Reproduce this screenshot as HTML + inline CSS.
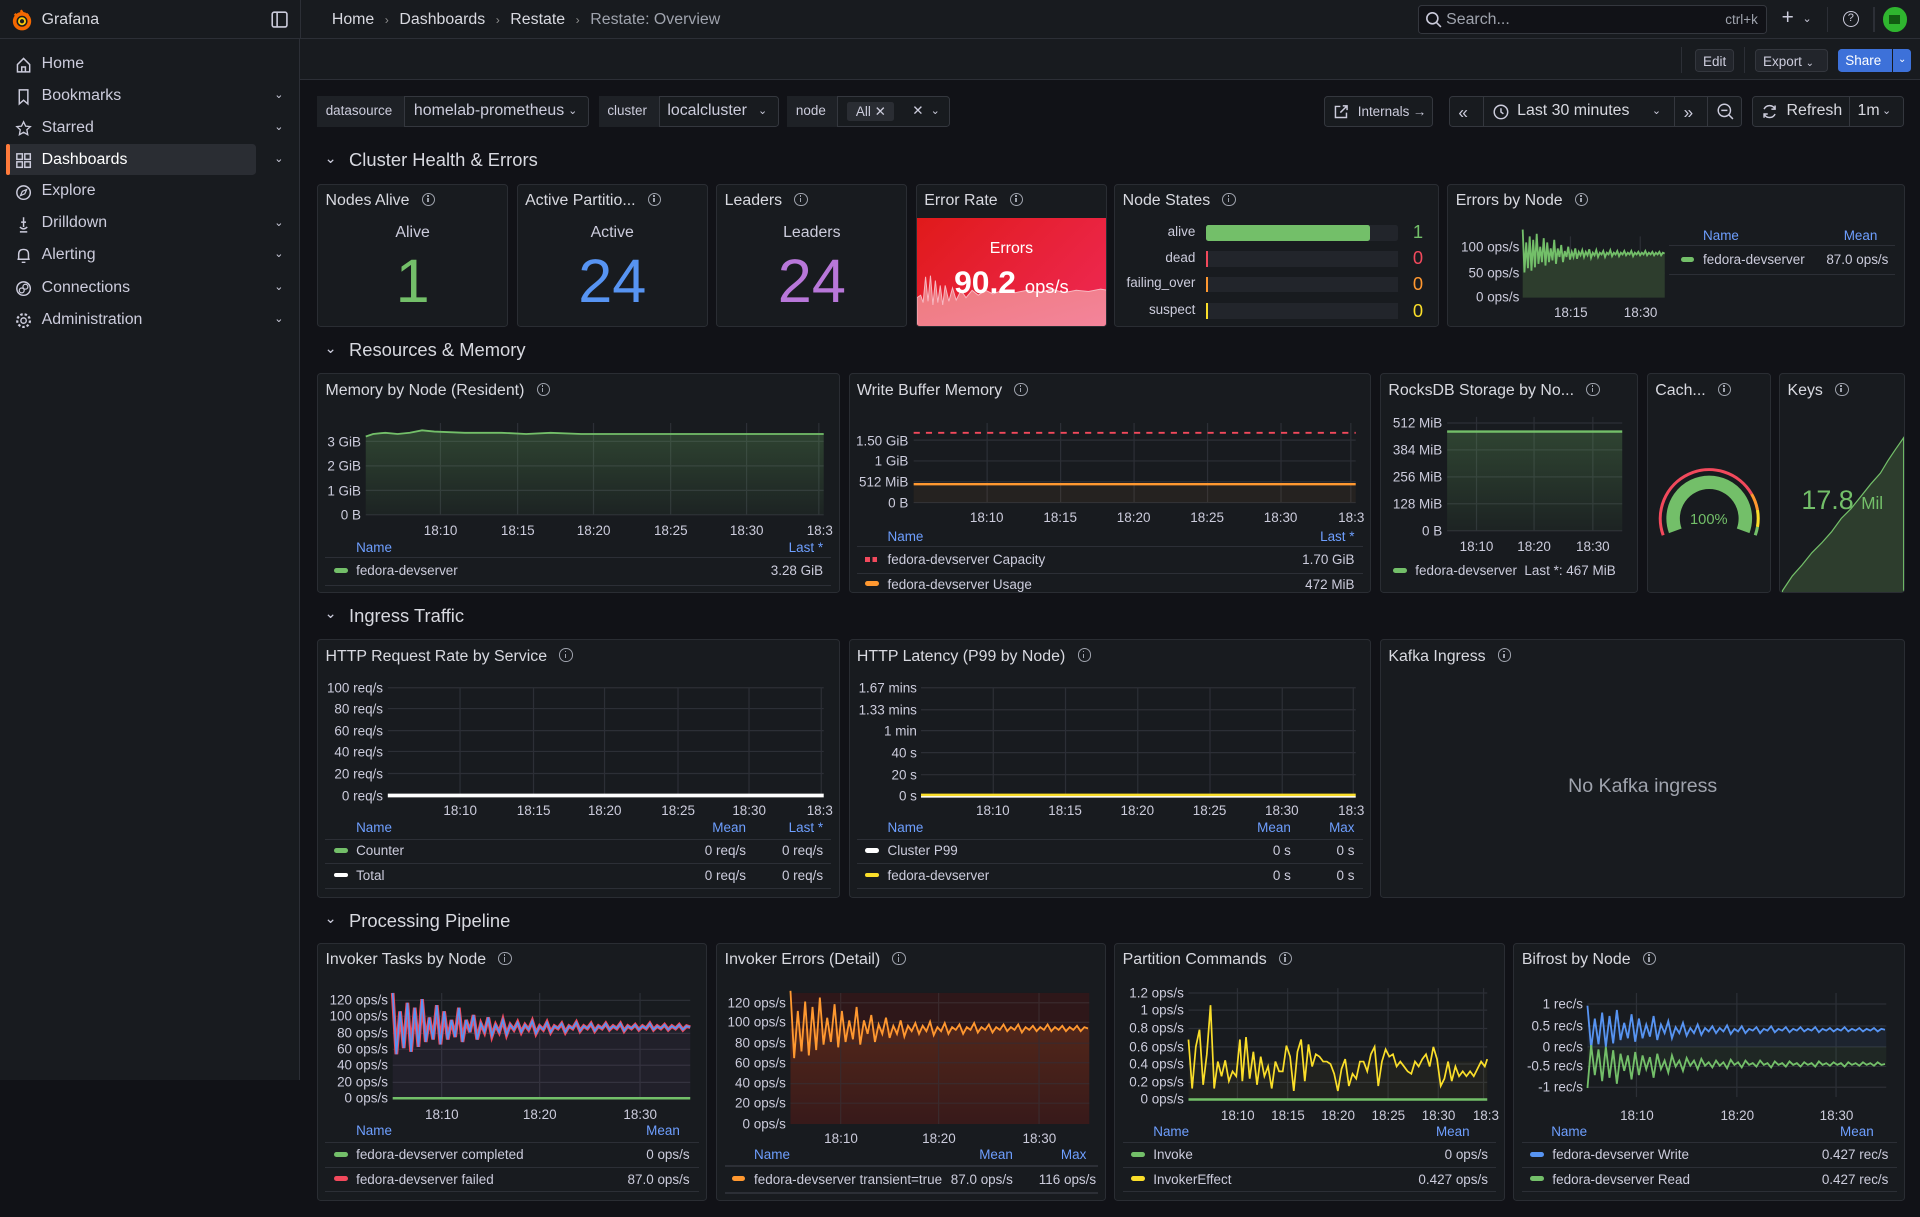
<!DOCTYPE html>
<html><head><meta charset="utf-8">
<style>
html{zoom:1.22449}
*{box-sizing:border-box;margin:0;padding:0}
body{width:1568px;height:994px;background:#111217;font-family:"Liberation Sans",sans-serif;color:#ccccdc;position:relative;overflow:hidden;font-size:12px}
.a{position:absolute}
.sb{left:0;top:0;width:245px;height:882px;background:#181b1f;border-right:1px solid #2c2f36}
.hd{left:0;top:0;width:1568px;height:32px;background:#181b1f;border-bottom:1px solid #2c2f36}
.sub{left:245px;top:32px;width:1323px;height:33px;background:#181b1f;border-bottom:1px solid #2c2f36}
.ni{left:0;width:245px;height:20px;font-size:13px;color:#ccccdc}
.ni span{position:absolute;left:34px;top:2px}
.ni svg{position:absolute;left:12px;top:3px}
.ni i{position:absolute;left:224px;top:3px;font-style:normal;font-size:9px;color:#ccccdc}
.p{position:absolute;background:#181b1f;border:1px solid #2a2d33;border-radius:3px;overflow:hidden}
.tt{position:absolute;left:6px;top:6px;font-size:13px;color:#d8d9e0;white-space:nowrap}
.inf{display:inline-block;width:11px;height:11px;border:1.3px solid #9fa3ad;border-radius:50%;margin-left:10px;vertical-align:-1px;position:relative}
.inf:after{content:"";position:absolute;left:3.5px;top:3.5px;width:1.3px;height:3.5px;background:#9fa3ad}
.inf:before{content:"";position:absolute;left:3.5px;top:1.2px;width:1.3px;height:1.3px;background:#9fa3ad}
.yl{position:absolute;font-size:11px;color:#ccccdc;text-align:right;white-space:nowrap;transform:translateY(-50%)}
.xl{position:absolute;font-size:11px;color:#ccccdc;transform:translateX(-50%);white-space:nowrap}
.lh{position:absolute;font-size:11px;color:#6e9fff}
.lr{position:absolute;font-size:11px;color:#ccccdc;white-space:nowrap}
.ln{position:absolute;height:1px;background:#2c2f36}
.sw{display:inline-block;width:11px;height:4px;border-radius:2px;margin-right:7px;vertical-align:2px}
.sec{position:absolute;font-size:15px;color:#d8d9e0}
.sec:before{content:"⌄";font-size:12px;margin-right:10px;position:relative;top:-3px;color:#ccccdc}
.btn{position:absolute;height:26px;border:1px solid #34373e;border-radius:3px;background:#181b1f;font-size:12px}
.vl{position:absolute;font-size:11px;color:#ccccdc}
.big{position:absolute;left:0;width:100%;text-align:center}
svg{position:absolute;left:0;top:0;overflow:visible}
</style></head><body>

<!-- header -->
<div class="a hd"></div>
<svg width="18" height="18" style="left:9px;top:7px" viewBox="0 0 18 18"><circle cx="9" cy="10" r="6" fill="none" stroke="#f46800" stroke-width="3"/><circle cx="9" cy="10" r="2.5" fill="none" stroke="#fbca0a" stroke-width="1.5"/><path d="M8 1 L10 4 M3 4 L5 6 M14 4 L12 6" stroke="#f46800" stroke-width="2"/></svg>
<div class="a" style="left:34px;top:9px;font-size:13px;color:#d8d9e0">Grafana</div>
<svg width="14" height="14" style="left:221px;top:9px"><rect x="1" y="1" width="12" height="12" rx="1.5" fill="none" stroke="#ccccdc" stroke-width="1.3"/><line x1="5" y1="1" x2="5" y2="13" stroke="#ccccdc" stroke-width="1.3"/></svg>
<div class="a" style="left:245px;top:0;width:1px;height:32px;background:#2c2f36"></div>
<div class="a" style="left:271px;top:9px;font-size:13px;color:#d8d9e0">Home <span style="color:#8e8e8e;font-size:10px;margin:0 5px">›</span> Dashboards <span style="color:#8e8e8e;font-size:10px;margin:0 5px">›</span> Restate <span style="color:#8e8e8e;font-size:10px;margin:0 5px">›</span> <span style="color:#9fa3ad">Restate: Overview</span></div>
<div class="a" style="left:1158px;top:4px;width:285px;height:24px;border:1px solid #34373e;border-radius:3px;background:#111217"></div>
<svg width="14" height="14" style="left:1164px;top:9px"><circle cx="6" cy="6" r="4.5" fill="none" stroke="#ccccdc" stroke-width="1.3"/><line x1="9.5" y1="9.5" x2="13" y2="13" stroke="#ccccdc" stroke-width="1.3"/></svg>
<div class="a" style="left:1181px;top:9px;font-size:13px;color:#9fa3ad">Search...</div>
<div class="a" style="left:1409px;top:10px;font-size:11px;color:#9fa3ad">ctrl+k</div>
<div class="a" style="left:1455px;top:5px;font-size:17px;color:#ccccdc">+</div><div class="a" style="left:1472px;top:10px;font-size:9px">⌄</div>
<div class="a" style="left:1492px;top:6px;width:1px;height:20px;background:#2c2f36"></div>
<div class="a" style="left:1505px;top:9px;width:13px;height:13px;border:1.3px solid #ccccdc;border-radius:50%;font-size:9px;text-align:center;line-height:11px">?</div>
<div class="a" style="left:1530px;top:6px;width:1px;height:20px;background:#2c2f36"></div>
<div class="a" style="left:1538px;top:6px;width:19px;height:20px;border-radius:50%;background:#2fb52f"></div>
<div class="a" style="left:1543px;top:12px;width:9px;height:8px;background:#125b12"></div>

<!-- sidebar -->
<div class="a sb" style="top:32px;height:850px"></div>
<div class="a" style="left:5px;top:118px;width:204px;height:25px;background:#2a2d33;border-radius:3px"></div>
<div class="a" style="left:5px;top:118px;width:3px;height:25px;background:#ff7b3b;border-radius:2px"></div>
<div class="a ni" style="top:43px"><svg width="14" height="14"><path d="M2 7 L7 2 L12 7 V13 H2 Z M5.5 13 V9 H8.5 V13" fill="none" stroke="#ccccdc" stroke-width="1.2"/></svg><span>Home</span></div>
<div class="a ni" style="top:69px"><svg width="14" height="14"><path d="M3.5 1.5 H10.5 V13 L7 10 L3.5 13 Z" fill="none" stroke="#ccccdc" stroke-width="1.2"/></svg><span>Bookmarks</span><i>⌄</i></div>
<div class="a ni" style="top:95px"><svg width="14" height="14"><path d="M7 1.5 L8.7 5 L12.5 5.4 L9.7 8 L10.4 12 L7 10 L3.6 12 L4.3 8 L1.5 5.4 L5.3 5 Z" fill="none" stroke="#ccccdc" stroke-width="1.1"/></svg><span>Starred</span><i>⌄</i></div>
<div class="a ni" style="top:121px"><svg width="14" height="14"><rect x="1.5" y="1.5" width="4.5" height="4.5" fill="none" stroke="#ccccdc" stroke-width="1.2"/><rect x="8" y="1.5" width="4.5" height="4.5" fill="none" stroke="#ccccdc" stroke-width="1.2"/><rect x="1.5" y="8" width="4.5" height="4.5" fill="none" stroke="#ccccdc" stroke-width="1.2"/><rect x="8" y="8" width="4.5" height="4.5" fill="none" stroke="#ccccdc" stroke-width="1.2"/></svg><span style="color:#fff">Dashboards</span><i>⌄</i></div>
<div class="a ni" style="top:147px"><svg width="14" height="14"><circle cx="7" cy="7" r="5.5" fill="none" stroke="#ccccdc" stroke-width="1.2"/><path d="M9.5 4.5 L8 8 L4.5 9.5 L6 6 Z" fill="none" stroke="#ccccdc"/></svg><span>Explore</span></div>
<div class="a ni" style="top:173px"><svg width="14" height="14"><path d="M7 1 V9 M4 13 H10 M5 5 H9 M4 9 Q7 12 10 9" fill="none" stroke="#ccccdc" stroke-width="1.2"/></svg><span>Drilldown</span><i>⌄</i></div>
<div class="a ni" style="top:199px"><svg width="14" height="14"><path d="M3 10 V6 Q3 2 7 2 Q11 2 11 6 V10 H3 Z M2 10 H12 M5.5 12.5 H8.5" fill="none" stroke="#ccccdc" stroke-width="1.2"/></svg><span>Alerting</span><i>⌄</i></div>
<div class="a ni" style="top:226px"><svg width="14" height="14"><circle cx="7" cy="7" r="5.5" fill="none" stroke="#ccccdc" stroke-width="1.2"/><circle cx="5.5" cy="8.5" r="2" fill="none" stroke="#ccccdc"/><circle cx="8.5" cy="5.5" r="2" fill="none" stroke="#ccccdc"/></svg><span>Connections</span><i>⌄</i></div>
<div class="a ni" style="top:252px"><svg width="14" height="14"><circle cx="7" cy="7" r="2.2" fill="none" stroke="#ccccdc" stroke-width="1.2"/><circle cx="7" cy="7" r="5.2" fill="none" stroke="#ccccdc" stroke-width="1.8" stroke-dasharray="2 1.6"/></svg><span>Administration</span><i>⌄</i></div>

<!-- sub header -->
<div class="a sub"></div>
<div class="a" style="left:1373px;top:38px;width:1px;height:22px;background:#2c2f36"></div>
<div class="btn" style="left:1384px;top:40px;width:32px;height:19px;font-size:11px;padding:3px 0 0 6px;background:#22252b">Edit</div>
<div class="a" style="left:1424px;top:38px;width:1px;height:22px;background:#2c2f36"></div>
<div class="btn" style="left:1433px;top:40px;width:60px;height:19px;font-size:11px;padding:3px 0 0 6px;background:#22252b">Export <span style="font-size:8px">⌄</span></div>
<div class="a" style="left:1501px;top:40px;width:44px;height:19px;background:#3d71d9;border-radius:3px 0 0 3px;color:#fff;font-size:11px;padding:3px 0 0 6px">Share</div>
<div class="a" style="left:1546px;top:40px;width:15px;height:19px;background:#3d71d9;border-radius:0 3px 3px 0;color:#fff;font-size:8px;padding:4px 0 0 4px">⌄</div>

<!-- variables -->
<div class="btn" style="left:259px;top:78px;width:222px"></div>
<div class="a" style="left:259px;top:78px;width:72px;height:26px;border-right:1px solid #34373e;background:#1e2126;font-size:11px;padding:6px 0 0 7px">datasource</div>
<div class="a" style="left:338px;top:83px;font-size:13px">homelab-prometheus</div><div class="a" style="left:464px;top:85px;font-size:9px">⌄</div>
<div class="btn" style="left:489px;top:78px;width:147px"></div>
<div class="a" style="left:489px;top:78px;width:50px;height:26px;border-right:1px solid #34373e;background:#1e2126;font-size:11px;padding:6px 0 0 7px">cluster</div>
<div class="a" style="left:545px;top:83px;font-size:13px">localcluster</div><div class="a" style="left:619px;top:85px;font-size:9px">⌄</div>
<div class="btn" style="left:643px;top:78px;width:133px"></div>
<div class="a" style="left:643px;top:78px;width:41px;height:26px;border-right:1px solid #34373e;background:#1e2126;font-size:11px;padding:6px 0 0 7px">node</div>
<div class="a" style="left:692px;top:83px;width:38px;height:16px;background:#2a2d33;border-radius:2px;font-size:11px;padding:2px 0 0 7px">All ✕</div>
<div class="a" style="left:745px;top:84px;font-size:11px">✕</div><div class="a" style="left:760px;top:85px;font-size:9px">⌄</div>

<div class="btn" style="left:1081px;top:78px;width:89px;font-size:11px;padding:6px 0 0 27px">Internals →</div>
<svg width="13" height="13" style="left:1089px;top:85px"><path d="M6 2 H2 V11 H11 V7 M8 1.5 H11.5 V5 M11.5 1.5 L6 7" fill="none" stroke="#ccccdc" stroke-width="1.2"/></svg>
<div class="btn" style="left:1183px;top:78px;width:240px"></div>
<div class="a" style="left:1211px;top:78px;width:1px;height:26px;background:#34373e"></div>
<div class="a" style="left:1367px;top:78px;width:1px;height:26px;background:#34373e"></div>
<div class="a" style="left:1394px;top:78px;width:1px;height:26px;background:#34373e"></div>
<div class="a" style="left:1191px;top:83px;font-size:14px">«</div>
<svg width="13" height="13" style="left:1219px;top:85px"><circle cx="6.5" cy="6.5" r="5.5" fill="none" stroke="#ccccdc" stroke-width="1.2"/><path d="M6.5 3.5 V6.5 L8.5 8" fill="none" stroke="#ccccdc" stroke-width="1.2"/></svg>
<div class="a" style="left:1239px;top:83px;font-size:13px;color:#d8d9e0">Last 30 minutes</div><div class="a" style="left:1349px;top:85px;font-size:9px">⌄</div>
<div class="a" style="left:1375px;top:83px;font-size:14px">»</div>
<svg width="14" height="14" style="left:1402px;top:84px"><circle cx="6" cy="6" r="5" fill="none" stroke="#ccccdc" stroke-width="1.2"/><path d="M3.5 6 H8.5 M9.7 9.7 L13 13" stroke="#ccccdc" stroke-width="1.2"/></svg>
<div class="btn" style="left:1431px;top:78px;width:124px"></div>
<div class="a" style="left:1510px;top:78px;width:1px;height:26px;background:#34373e"></div>
<svg width="14" height="14" style="left:1438px;top:84px"><path d="M11.5 5 A5 5 0 0 0 2.5 5 M2.5 9 A5 5 0 0 0 11.5 9 M11.5 2 V5 H8.5 M2.5 12 V9 H5.5" fill="none" stroke="#ccccdc" stroke-width="1.2"/></svg>
<div class="a" style="left:1459px;top:83px;font-size:13px;color:#d8d9e0">Refresh</div>
<div class="a" style="left:1517px;top:83px;font-size:13px;color:#d8d9e0">1m</div><div class="a" style="left:1537px;top:85px;font-size:9px">⌄</div>

<!-- sections -->
<div class="sec" style="left:265px;top:122px">Cluster Health &amp; Errors</div>
<div class="sec" style="left:265px;top:277px">Resources &amp; Memory</div>
<div class="sec" style="left:265px;top:494px">Ingress Traffic</div>
<div class="sec" style="left:265px;top:743px">Processing Pipeline</div>

<!-- row 1 stats -->
<div class="p" style="left:259px;top:150px;width:156px;height:117px"><div class="tt">Nodes Alive<span class="inf"></span></div>
<div class="big" style="top:32px;font-size:13px">Alive</div><div class="big" style="top:50px;font-size:50px;color:#73bf69">1</div></div>
<div class="p" style="left:422px;top:150px;width:156px;height:117px"><div class="tt">Active Partitio...<span class="inf"></span></div>
<div class="big" style="top:32px;font-size:13px">Active</div><div class="big" style="top:50px;font-size:50px;color:#5794f2">24</div></div>
<div class="p" style="left:585px;top:150px;width:156px;height:117px"><div class="tt">Leaders<span class="inf"></span></div>
<div class="big" style="top:32px;font-size:13px">Leaders</div><div class="big" style="top:50px;font-size:50px;color:#b877d9">24</div></div>
<div class="p" style="left:748px;top:150px;width:156px;height:117px"><div class="tt">Error Rate<span class="inf"></span></div>
<div class="a" style="left:0;top:27px;width:156px;height:90px;background:linear-gradient(135deg,#e01a1a,#ef2956)"></div>
<svg width="156" height="117"><defs><linearGradient id="eg" x1="0" y1="0" x2="1" y2="1"><stop offset="0" stop-color="#ee7a7a"/><stop offset="1" stop-color="#f4849c"/></linearGradient></defs>
<path d="M0 117 V92 L3 90 L5 96 L7 75 L9 95 L11 74 L13 98 L15 78 L17 96 L19 82 L21 98 L23 82 L26 95 L29 84 L32 94 L36 86 L40 92 L45 86 L50 90 L56 86 L62 89 L70 86 L80 88 L90 86 L100 88 L110 85 L120 88 L130 86 L140 87 L150 85 L156 86 V117 Z" fill="url(#eg)" stroke="#f7b8c2" stroke-width="0.8"/></svg>
<div class="big" style="top:45px;font-size:13px;color:#fff">Errors</div>
<div class="big" style="top:65px;font-size:26px;color:#fff;font-weight:bold">90.2 <span style="font-size:15px;font-weight:normal">ops/s</span></div></div>

<div class="p" style="left:910px;top:150px;width:265px;height:117px"><div class="tt">Node States<span class="inf"></span></div>
<div class="vl" style="right:198px;top:32px;font-size:11px">alive</div><div class="a" style="left:74px;top:33px;width:157px;height:13px;background:#22252b;border-radius:2px"></div><div class="a" style="left:74px;top:33px;width:134px;height:13px;background:#73bf69;border-radius:2px"></div><div class="a" style="left:243px;top:30px;font-size:15px;color:#73bf69">1</div>
<div class="vl" style="right:198px;top:53px">dead</div><div class="a" style="left:74px;top:54px;width:157px;height:13px;background:#22252b"></div><div class="a" style="left:74px;top:54px;width:2px;height:13px;background:#f2495c"></div><div class="a" style="left:243px;top:51px;font-size:15px;color:#f2495c">0</div>
<div class="vl" style="right:198px;top:74px">failing_over</div><div class="a" style="left:74px;top:75px;width:157px;height:13px;background:#22252b"></div><div class="a" style="left:74px;top:75px;width:2px;height:13px;background:#ff9830"></div><div class="a" style="left:243px;top:72px;font-size:15px;color:#ff9830">0</div>
<div class="vl" style="right:198px;top:96px">suspect</div><div class="a" style="left:74px;top:97px;width:157px;height:13px;background:#22252b"></div><div class="a" style="left:74px;top:97px;width:2px;height:13px;background:#fade2a"></div><div class="a" style="left:243px;top:94px;font-size:15px;color:#fade2a">0</div>
</div>

<div class="p" style="left:1182px;top:150px;width:374px;height:117px"><div class="tt">Errors by Node<span class="inf"></span></div>
<svg width="374" height="117"><line x1="100" y1="42" x2="100" y2="92" stroke="#2c2f36"/><line x1="157" y1="42" x2="157" y2="92" stroke="#2c2f36"/><line x1="61" y1="72" x2="177" y2="72" stroke="#2c2f36"/>
<rect x="61" y="56" width="116" height="36" fill="#2d3d2d"/>
<g transform="translate(61,56) scale(0.477,0.7)"><polyline vector-effect="non-scaling-stroke" fill="none" stroke="#73bf69" stroke-width="1.5" points="0,-28 3,22 6,-13 9,17 12,-20 15,20 18,-16 21,16 24,-23 27,12 30,-8 33,10 36,-18 39,14 42,-13 45,10 48,-6 51,8 54,-16 57,12 60,-6 63,4 66,-10 69,10 72,-3 75,4 78,-8 81,7 84,-2 87,4 90,-6 93,6 96,-2 99,2 102,-4 105,4 108,-2 111,2 114,-5 117,5 120,-1 123,2 126,-4 129,4 132,-1 135,1 138,-3 141,4 144,-1 147,1 150,-4 153,3 156,-1 159,1 162,-3 165,3 168,-1 171,1 174,-3 177,2 180,-1 183,1 186,-3 189,3 192,-1 195,1 198,-2 201,2 204,-1 207,1 210,-3 213,2 216,-1 219,1 222,-2 225,2 228,-1 231,1 234,-2 237,2 240,-1 243,0"/></g></svg>
<div class="yl" style="left:0;width:58px;top:51px">100 ops/s</div><div class="yl" style="left:0;width:58px;top:72px">50 ops/s</div><div class="yl" style="left:0;width:58px;top:92px">0 ops/s</div>
<div class="xl" style="left:100px;top:98px">18:15</div><div class="xl" style="left:157px;top:98px">18:30</div>
<div class="lh" style="left:208px;top:35px">Name</div><div class="lh" style="right:22px;top:35px">Mean</div>
<div class="ln" style="left:180px;width:185px;top:49px"></div><div class="lr" style="left:190px;top:55px"><span class="sw" style="background:#73bf69"></span>fedora-devserver</div><div class="lr" style="right:13px;top:55px">87.0 ops/s</div><div class="ln" style="left:180px;width:185px;top:73px"></div>
</div>

<!-- row 2 -->
<div class="p" style="left:259px;top:305px;width:427px;height:179px"><div class="tt">Memory by Node (Resident)<span class="inf"></span></div>
<svg width="427" height="179"><g stroke="#2c2f36"><line x1="39" y1="55" x2="413" y2="55"/><line x1="39" y1="75" x2="413" y2="75"/><line x1="39" y1="95" x2="413" y2="95"/><line x1="39" y1="115" x2="413" y2="115"/><line x1="100" y1="40" x2="100" y2="115"/><line x1="163" y1="40" x2="163" y2="115"/><line x1="225" y1="40" x2="225" y2="115"/><line x1="288" y1="40" x2="288" y2="115"/><line x1="350" y1="40" x2="350" y2="115"/><line x1="409" y1="40" x2="409" y2="115"/></g>
<defs><linearGradient id="gg" x1="0" y1="0" x2="0" y2="1"><stop offset="0" stop-color="#73bf69" stop-opacity=".25"/><stop offset="1" stop-color="#73bf69" stop-opacity=".05"/></linearGradient></defs>
<path d="M39 51 L45 49 L55 48 L65 49 L75 48 L85 46 L95 47 L120 48 L150 48 L170 49 L190 48 L215 49 L260 49 L413 49 V115 H39 Z" fill="url(#gg)"/>
<polyline points="39,51 45,49 55,48 65,49 75,48 85,46 95,47 120,48 150,48 170,49 190,48 215,49 260,49 413,49" fill="none" stroke="#73bf69" stroke-width="1.5"/></svg>
<div class="yl" style="left:0;width:35px;top:55px">3 GiB</div><div class="yl" style="left:0;width:35px;top:75px">2 GiB</div><div class="yl" style="left:0;width:35px;top:95px">1 GiB</div><div class="yl" style="left:0;width:35px;top:115px">0 B</div>
<div class="xl" style="left:100px;top:121px">18:10</div><div class="xl" style="left:163px;top:121px">18:15</div><div class="xl" style="left:225px;top:121px">18:20</div><div class="xl" style="left:288px;top:121px">18:25</div><div class="xl" style="left:350px;top:121px">18:30</div><div class="xl" style="left:409px;top:121px;transform:none;left:399px">18:3</div>
<div class="lh" style="left:31px;top:135px">Name</div><div class="lh" style="right:13px;top:135px">Last *</div>
<div class="ln" style="left:6px;width:413px;top:149px"></div><div class="lr" style="left:13px;top:154px"><span class="sw" style="background:#73bf69"></span>fedora-devserver</div><div class="lr" style="right:13px;top:154px">3.28 GiB</div><div class="ln" style="left:6px;width:413px;top:172px"></div>
</div>

<div class="p" style="left:693px;top:305px;width:427px;height:179px"><div class="tt">Write Buffer Memory<span class="inf"></span></div>
<svg width="427" height="179"><g stroke="#2c2f36"><line x1="52" y1="54" x2="413" y2="54"/><line x1="52" y1="71" x2="413" y2="71"/><line x1="52" y1="88" x2="413" y2="88"/><line x1="52" y1="105" x2="413" y2="105"/><line x1="112" y1="40" x2="112" y2="105"/><line x1="172" y1="40" x2="172" y2="105"/><line x1="232" y1="40" x2="232" y2="105"/><line x1="292" y1="40" x2="292" y2="105"/><line x1="352" y1="40" x2="352" y2="105"/><line x1="409" y1="40" x2="409" y2="105"/></g>
<rect x="52" y="90" width="361" height="15" fill="#ff9830" opacity=".06"/>
<line x1="52" y1="48" x2="413" y2="48" stroke="#f2495c" stroke-width="1.5" stroke-dasharray="5 5"/>
<line x1="52" y1="90" x2="413" y2="90" stroke="#ff9830" stroke-width="2"/></svg>
<div class="yl" style="left:0;width:48px;top:54px">1.50 GiB</div><div class="yl" style="left:0;width:48px;top:71px">1 GiB</div><div class="yl" style="left:0;width:48px;top:88px">512 MiB</div><div class="yl" style="left:0;width:48px;top:105px">0 B</div>
<div class="xl" style="left:112px;top:111px">18:10</div><div class="xl" style="left:172px;top:111px">18:15</div><div class="xl" style="left:232px;top:111px">18:20</div><div class="xl" style="left:292px;top:111px">18:25</div><div class="xl" style="left:352px;top:111px">18:30</div><div class="xl" style="left:399px;top:111px;transform:none">18:3</div>
<div class="lh" style="left:31px;top:126px">Name</div><div class="lh" style="right:13px;top:126px">Last *</div>
<div class="ln" style="left:6px;width:413px;top:140px"></div><div class="lr" style="left:13px;top:145px"><span class="sw" style="background:repeating-linear-gradient(90deg,#f2495c 0 4px,transparent 4px 6px);border-radius:0"></span>fedora-devserver Capacity</div><div class="lr" style="right:13px;top:145px">1.70 GiB</div><div class="ln" style="left:6px;width:413px;top:162px"></div>
<div class="lr" style="left:13px;top:165px"><span class="sw" style="background:#ff9830"></span>fedora-devserver Usage</div><div class="lr" style="right:13px;top:165px">472 MiB</div>
</div>

<div class="p" style="left:1127px;top:305px;width:211px;height:179px"><div class="tt">RocksDB Storage by No...<span class="inf"></span></div>
<svg width="211" height="179"><g stroke="#2c2f36"><line x1="54" y1="40" x2="197" y2="40"/><line x1="54" y1="62" x2="197" y2="62"/><line x1="54" y1="84" x2="197" y2="84"/><line x1="54" y1="106" x2="197" y2="106"/><line x1="54" y1="128" x2="197" y2="128"/><line x1="78" y1="35" x2="78" y2="128"/><line x1="125" y1="35" x2="125" y2="128"/><line x1="173" y1="35" x2="173" y2="128"/></g>
<rect x="54" y="47" width="143" height="81" fill="url(#gg)"/><line x1="54" y1="47" x2="197" y2="47" stroke="#73bf69" stroke-width="2"/></svg>
<div class="yl" style="left:0;width:50px;top:40px">512 MiB</div><div class="yl" style="left:0;width:50px;top:62px">384 MiB</div><div class="yl" style="left:0;width:50px;top:84px">256 MiB</div><div class="yl" style="left:0;width:50px;top:106px">128 MiB</div><div class="yl" style="left:0;width:50px;top:128px">0 B</div>
<div class="xl" style="left:78px;top:134px">18:10</div><div class="xl" style="left:125px;top:134px">18:20</div><div class="xl" style="left:173px;top:134px">18:30</div>
<div class="lr" style="left:10px;top:154px"><span class="sw" style="background:#73bf69"></span>fedora-devserver&nbsp; Last *: 467 MiB</div>
</div>

<div class="p" style="left:1345px;top:305px;width:101px;height:179px"><div class="tt">Cach...<span class="inf"></span></div>
<svg width="101" height="179">
<path d="M12.4 131.7 A40 40 0 0 1 84.6 98" fill="none" stroke="#f2495c" stroke-width="2.5"/>
<path d="M84.6 98 A40 40 0 0 1 89.4 111.1" fill="none" stroke="#ff9830" stroke-width="2.5"/>
<path d="M89.4 111.1 A40 40 0 0 1 89.4 124.9" fill="none" stroke="#fade2a" stroke-width="2.5"/>
<path d="M89.4 124.9 A40 40 0 0 1 87.6 131.7" fill="none" stroke="#73bf69" stroke-width="2.5"/>
<path d="M22.3 128.1 A29.5 29.5 0 1 1 77.7 128.1" fill="none" stroke="#73bf69" stroke-width="11"/></svg>
<div class="big" style="top:112px;font-size:12px;color:#73bf69">100%</div>
</div>

<div class="p" style="left:1453px;top:305px;width:103px;height:179px"><div class="tt">Keys<span class="inf"></span></div>
<svg width="103" height="179"><path d="M2 177 L10 165 L18 156 L26 146 L34 138 L42 129 L50 118 L58 110 L66 100 L74 90 L82 81 L88 71 L94 62 L101 52 V179 H2 Z" fill="#2d3d2d" stroke="#73bf69" stroke-width="1"/></svg>
<div class="big" style="top:90px;font-size:22px;color:#73bf69">17.8 <span style="font-size:14px">Mil</span></div>
</div>

<!-- row 3 -->
<div class="p" style="left:259px;top:522px;width:427px;height:211px"><div class="tt">HTTP Request Rate by Service<span class="inf"></span></div>
<svg width="427" height="211"><g stroke="#2c2f36"><line x1="57" y1="39" x2="413" y2="39"/><line x1="57" y1="56" x2="413" y2="56"/><line x1="57" y1="74" x2="413" y2="74"/><line x1="57" y1="91" x2="413" y2="91"/><line x1="57" y1="109" x2="413" y2="109"/><line x1="116" y1="39" x2="116" y2="127"/><line x1="176" y1="39" x2="176" y2="127"/><line x1="234" y1="39" x2="234" y2="127"/><line x1="294" y1="39" x2="294" y2="127"/><line x1="352" y1="39" x2="352" y2="127"/><line x1="411" y1="39" x2="411" y2="127"/></g>
<line x1="57" y1="127" x2="413" y2="127" stroke="#fff" stroke-width="3"/></svg>
<div class="yl" style="left:0;width:53px;top:39px">100 req/s</div><div class="yl" style="left:0;width:53px;top:56px">80 req/s</div><div class="yl" style="left:0;width:53px;top:74px">60 req/s</div><div class="yl" style="left:0;width:53px;top:91px">40 req/s</div><div class="yl" style="left:0;width:53px;top:109px">20 req/s</div><div class="yl" style="left:0;width:53px;top:127px">0 req/s</div>
<div class="xl" style="left:116px;top:133px">18:10</div><div class="xl" style="left:176px;top:133px">18:15</div><div class="xl" style="left:234px;top:133px">18:20</div><div class="xl" style="left:294px;top:133px">18:25</div><div class="xl" style="left:352px;top:133px">18:30</div><div class="xl" style="left:399px;top:133px;transform:none">18:3</div>
<div class="lh" style="left:31px;top:147px">Name</div><div class="lh" style="right:76px;top:147px">Mean</div><div class="lh" style="right:13px;top:147px">Last *</div>
<div class="ln" style="left:6px;width:413px;top:162px"></div><div class="lr" style="left:13px;top:166px"><span class="sw" style="background:#73bf69"></span>Counter</div><div class="lr" style="right:76px;top:166px">0 req/s</div><div class="lr" style="right:13px;top:166px">0 req/s</div>
<div class="ln" style="left:6px;width:413px;top:182px"></div><div class="lr" style="left:13px;top:186px"><span class="sw" style="background:#fff"></span>Total</div><div class="lr" style="right:76px;top:186px">0 req/s</div><div class="lr" style="right:13px;top:186px">0 req/s</div><div class="ln" style="left:6px;width:413px;top:202px"></div>
</div>

<div class="p" style="left:693px;top:522px;width:427px;height:211px"><div class="tt">HTTP Latency (P99 by Node)<span class="inf"></span></div>
<svg width="427" height="211"><g stroke="#2c2f36"><line x1="58" y1="39" x2="413" y2="39"/><line x1="58" y1="57" x2="413" y2="57"/><line x1="58" y1="74" x2="413" y2="74"/><line x1="58" y1="92" x2="413" y2="92"/><line x1="58" y1="110" x2="413" y2="110"/><line x1="117" y1="39" x2="117" y2="127"/><line x1="176" y1="39" x2="176" y2="127"/><line x1="235" y1="39" x2="235" y2="127"/><line x1="294" y1="39" x2="294" y2="127"/><line x1="353" y1="39" x2="353" y2="127"/><line x1="411" y1="39" x2="411" y2="127"/></g>
<line x1="58" y1="128" x2="413" y2="128" stroke="#fff" stroke-width="1.5"/><line x1="58" y1="126.5" x2="413" y2="126.5" stroke="#fade2a" stroke-width="2"/></svg>
<div class="yl" style="left:0;width:55px;top:39px">1.67 mins</div><div class="yl" style="left:0;width:55px;top:57px">1.33 mins</div><div class="yl" style="left:0;width:55px;top:74px">1 min</div><div class="yl" style="left:0;width:55px;top:92px">40 s</div><div class="yl" style="left:0;width:55px;top:110px">20 s</div><div class="yl" style="left:0;width:55px;top:127px">0 s</div>
<div class="xl" style="left:117px;top:133px">18:10</div><div class="xl" style="left:176px;top:133px">18:15</div><div class="xl" style="left:235px;top:133px">18:20</div><div class="xl" style="left:294px;top:133px">18:25</div><div class="xl" style="left:353px;top:133px">18:30</div><div class="xl" style="left:399px;top:133px;transform:none">18:3</div>
<div class="lh" style="left:31px;top:147px">Name</div><div class="lh" style="right:65px;top:147px">Mean</div><div class="lh" style="right:13px;top:147px">Max</div>
<div class="ln" style="left:6px;width:413px;top:162px"></div><div class="lr" style="left:13px;top:166px"><span class="sw" style="background:#fff"></span>Cluster P99</div><div class="lr" style="right:65px;top:166px">0 s</div><div class="lr" style="right:13px;top:166px">0 s</div>
<div class="ln" style="left:6px;width:413px;top:182px"></div><div class="lr" style="left:13px;top:186px"><span class="sw" style="background:#fade2a"></span>fedora-devserver</div><div class="lr" style="right:65px;top:186px">0 s</div><div class="lr" style="right:13px;top:186px">0 s</div><div class="ln" style="left:6px;width:413px;top:202px"></div>
</div>

<div class="p" style="left:1127px;top:522px;width:429px;height:211px"><div class="tt">Kafka Ingress<span class="inf"></span></div>
<div class="big" style="top:110px;font-size:16px;color:#9fa3ad">No Kafka ingress</div></div>

<!-- row 4 -->
<div class="p" style="left:259px;top:770px;width:318px;height:211px"><div class="tt">Invoker Tasks by Node<span class="inf"></span></div>
<svg width="318" height="211"><g stroke="#2c2f36"><line x1="61" y1="46" x2="304" y2="46"/><line x1="61" y1="59" x2="304" y2="59"/><line x1="61" y1="73" x2="304" y2="73"/><line x1="61" y1="86" x2="304" y2="86"/><line x1="61" y1="99" x2="304" y2="99"/><line x1="61" y1="113" x2="304" y2="113"/><line x1="101" y1="40" x2="101" y2="126"/><line x1="181" y1="40" x2="181" y2="126"/><line x1="263" y1="40" x2="263" y2="126"/></g>
<rect x="61" y="68" width="243" height="58" fill="#b877d9" opacity=".06"/>
<g transform="translate(61,68)"><polyline fill="none" stroke="#f2495c" stroke-width="3" points="0,-28 3,22 6,-13 9,17 12,-20 15,20 18,-16 21,16 24,-23 27,12 30,-8 33,10 36,-18 39,14 42,-13 45,10 48,-6 51,8 54,-16 57,12 60,-6 63,4 66,-10 69,10 72,-3 75,4 78,-8 81,7 84,-2 87,4 90,-6 93,6 96,-2 99,2 102,-4 105,4 108,-2 111,2 114,-5 117,5 120,-1 123,2 126,-4 129,4 132,-1 135,1 138,-3 141,4 144,-1 147,1 150,-4 153,3 156,-1 159,1 162,-3 165,3 168,-1 171,1 174,-3 177,2 180,-1 183,1 186,-3 189,3 192,-1 195,1 198,-2 201,2 204,-1 207,1 210,-3 213,2 216,-1 219,1 222,-2 225,2 228,-1 231,1 234,-2 237,2 240,-1 243,0"/><polyline fill="none" stroke="#5794f2" stroke-width="1.4" points="0,-28 3,22 6,-13 9,17 12,-20 15,20 18,-16 21,16 24,-23 27,12 30,-8 33,10 36,-18 39,14 42,-13 45,10 48,-6 51,8 54,-16 57,12 60,-6 63,4 66,-10 69,10 72,-3 75,4 78,-8 81,7 84,-2 87,4 90,-6 93,6 96,-2 99,2 102,-4 105,4 108,-2 111,2 114,-5 117,5 120,-1 123,2 126,-4 129,4 132,-1 135,1 138,-3 141,4 144,-1 147,1 150,-4 153,3 156,-1 159,1 162,-3 165,3 168,-1 171,1 174,-3 177,2 180,-1 183,1 186,-3 189,3 192,-1 195,1 198,-2 201,2 204,-1 207,1 210,-3 213,2 216,-1 219,1 222,-2 225,2 228,-1 231,1 234,-2 237,2 240,-1 243,0"/></g>
<line x1="61" y1="126" x2="304" y2="126" stroke="#73bf69" stroke-width="2"/></svg>
<div class="yl" style="left:0;width:57px;top:46px">120 ops/s</div><div class="yl" style="left:0;width:57px;top:59px">100 ops/s</div><div class="yl" style="left:0;width:57px;top:73px">80 ops/s</div><div class="yl" style="left:0;width:57px;top:86px">60 ops/s</div><div class="yl" style="left:0;width:57px;top:99px">40 ops/s</div><div class="yl" style="left:0;width:57px;top:113px">20 ops/s</div><div class="yl" style="left:0;width:57px;top:126px">0 ops/s</div>
<div class="xl" style="left:101px;top:133px">18:10</div><div class="xl" style="left:181px;top:133px">18:20</div><div class="xl" style="left:263px;top:133px">18:30</div>
<div class="lh" style="left:31px;top:146px">Name</div><div class="lh" style="right:21px;top:146px">Mean</div>
<div class="ln" style="left:6px;width:305px;top:162px"></div><div class="lr" style="left:13px;top:166px"><span class="sw" style="background:#73bf69"></span>fedora-devserver completed</div><div class="lr" style="right:13px;top:166px">0 ops/s</div>
<div class="ln" style="left:6px;width:305px;top:182px"></div><div class="lr" style="left:13px;top:186px"><span class="sw" style="background:#f2495c"></span>fedora-devserver failed</div><div class="lr" style="right:13px;top:186px">87.0 ops/s</div><div class="ln" style="left:6px;width:305px;top:202px"></div>
</div>

<div class="p" style="left:585px;top:770px;width:318px;height:211px"><div class="tt">Invoker Errors (Detail)<span class="inf"></span></div>
<svg width="318" height="211"><defs><linearGradient id="og" x1="0" y1="0" x2="0" y2="1"><stop offset="0" stop-color="#5a2a1a" stop-opacity=".8"/><stop offset="1" stop-color="#3a1a1a" stop-opacity=".8"/></linearGradient></defs>
<rect x="60" y="40" width="244" height="107" fill="#2e1719"/><rect x="60" y="69" width="244" height="78" fill="url(#og)"/>
<g stroke="#3a2a2c"><line x1="60" y1="48" x2="304" y2="48"/><line x1="60" y1="64" x2="304" y2="64"/><line x1="60" y1="81" x2="304" y2="81"/><line x1="60" y1="97" x2="304" y2="97"/><line x1="60" y1="114" x2="304" y2="114"/><line x1="60" y1="130" x2="304" y2="130"/><line x1="101" y1="40" x2="101" y2="147"/><line x1="181" y1="40" x2="181" y2="147"/><line x1="263" y1="40" x2="263" y2="147"/></g>
<g transform="translate(60,69) scale(1,1.1)"><polyline vector-effect="non-scaling-stroke" fill="none" stroke="#ff9830" stroke-width="1.5" points="0,-28 3,22 6,-13 9,17 12,-20 15,20 18,-16 21,16 24,-23 27,12 30,-8 33,10 36,-18 39,14 42,-13 45,10 48,-6 51,8 54,-16 57,12 60,-6 63,4 66,-10 69,10 72,-3 75,4 78,-8 81,7 84,-2 87,4 90,-6 93,6 96,-2 99,2 102,-4 105,4 108,-2 111,2 114,-5 117,5 120,-1 123,2 126,-4 129,4 132,-1 135,1 138,-3 141,4 144,-1 147,1 150,-4 153,3 156,-1 159,1 162,-3 165,3 168,-1 171,1 174,-3 177,2 180,-1 183,1 186,-3 189,3 192,-1 195,1 198,-2 201,2 204,-1 207,1 210,-3 213,2 216,-1 219,1 222,-2 225,2 228,-1 231,1 234,-2 237,2 240,-1 243,0"/></g></svg>
<div class="yl" style="left:0;width:56px;top:48px">120 ops/s</div><div class="yl" style="left:0;width:56px;top:64px">100 ops/s</div><div class="yl" style="left:0;width:56px;top:81px">80 ops/s</div><div class="yl" style="left:0;width:56px;top:97px">60 ops/s</div><div class="yl" style="left:0;width:56px;top:114px">40 ops/s</div><div class="yl" style="left:0;width:56px;top:130px">20 ops/s</div><div class="yl" style="left:0;width:56px;top:147px">0 ops/s</div>
<div class="xl" style="left:101px;top:153px">18:10</div><div class="xl" style="left:181px;top:153px">18:20</div><div class="xl" style="left:263px;top:153px">18:30</div>
<div class="lh" style="left:30px;top:166px">Name</div><div class="lh" style="right:75px;top:166px">Mean</div><div class="lh" style="right:15px;top:166px">Max</div>
<div class="ln" style="left:6px;width:305px;top:181px"></div><div class="lr" style="left:12px;top:186px"><span class="sw" style="background:#ff9830"></span>fedora-devserver transient=true</div><div class="lr" style="right:75px;top:186px">87.0 ops/s</div><div class="lr" style="right:7px;top:186px">116 ops/s</div><div class="ln" style="left:6px;width:305px;top:203px"></div>
</div>

<div class="p" style="left:910px;top:770px;width:319px;height:211px"><div class="tt">Partition Commands<span class="inf"></span></div>
<svg width="319" height="211"><g stroke="#2c2f36"><line x1="60" y1="40" x2="304" y2="40"/><line x1="60" y1="54" x2="304" y2="54"/><line x1="60" y1="69" x2="304" y2="69"/><line x1="60" y1="84" x2="304" y2="84"/><line x1="60" y1="98" x2="304" y2="98"/><line x1="60" y1="113" x2="304" y2="113"/><line x1="100" y1="36" x2="100" y2="127"/><line x1="141" y1="36" x2="141" y2="127"/><line x1="182" y1="36" x2="182" y2="127"/><line x1="223" y1="36" x2="223" y2="127"/><line x1="264" y1="36" x2="264" y2="127"/><line x1="301" y1="36" x2="301" y2="127"/></g>
<rect x="60" y="96" width="244" height="31" fill="#fade2a" opacity=".04"/>
<polyline fill="none" stroke="#fade2a" stroke-width="1.4" points="60,78 63,118 66,84 69,70 72,115 75,90 78,50 81,118 84,96 87,108 90,95 93,112 96,104 99,108 102,78 104,112 107,76 110,110 113,88 116,115 119,92 122,108 125,100 128,118 131,96 134,104 137,104 140,83 143,92 146,120 149,88 152,78 155,112 158,82 161,100 164,90 167,92 170,96 173,96 176,98 179,106 182,120 185,102 188,94 191,116 194,106 197,110 200,96 203,96 206,104 209,90 212,84 215,116 218,96 221,86 224,92 227,90 230,100 233,96 236,100 239,104 242,106 245,96 248,100 251,94 254,90 257,100 260,84 263,94 266,116 269,110 272,96 275,112 278,100 281,108 284,104 287,108 290,104 293,108 296,102 299,96 302,100 304,94"/>
<line x1="60" y1="127" x2="304" y2="127" stroke="#73bf69" stroke-width="2"/></svg>
<div class="yl" style="left:0;width:56px;top:40px">1.2 ops/s</div><div class="yl" style="left:0;width:56px;top:54px">1 ops/s</div><div class="yl" style="left:0;width:56px;top:69px">0.8 ops/s</div><div class="yl" style="left:0;width:56px;top:84px">0.6 ops/s</div><div class="yl" style="left:0;width:56px;top:98px">0.4 ops/s</div><div class="yl" style="left:0;width:56px;top:113px">0.2 ops/s</div><div class="yl" style="left:0;width:56px;top:127px">0 ops/s</div>
<div class="xl" style="left:100px;top:134px">18:10</div><div class="xl" style="left:141px;top:134px">18:15</div><div class="xl" style="left:182px;top:134px">18:20</div><div class="xl" style="left:223px;top:134px">18:25</div><div class="xl" style="left:264px;top:134px">18:30</div><div class="xl" style="left:292px;top:134px;transform:none">18:3</div>
<div class="lh" style="left:31px;top:147px">Name</div><div class="lh" style="right:28px;top:147px">Mean</div>
<div class="ln" style="left:6px;width:305px;top:162px"></div><div class="lr" style="left:13px;top:166px"><span class="sw" style="background:#73bf69"></span>Invoke</div><div class="lr" style="right:13px;top:166px">0 ops/s</div>
<div class="ln" style="left:6px;width:305px;top:182px"></div><div class="lr" style="left:13px;top:186px"><span class="sw" style="background:#fade2a"></span>InvokerEffect</div><div class="lr" style="right:13px;top:186px">0.427 ops/s</div><div class="ln" style="left:6px;width:305px;top:202px"></div>
</div>

<div class="p" style="left:1236px;top:770px;width:320px;height:211px"><div class="tt">Bifrost by Node<span class="inf"></span></div>
<svg width="320" height="211"><g stroke="#2c2f36"><line x1="60" y1="49" x2="304" y2="49"/><line x1="60" y1="67" x2="304" y2="67"/><line x1="60" y1="84" x2="304" y2="84"/><line x1="60" y1="100" x2="304" y2="100"/><line x1="60" y1="117" x2="304" y2="117"/><line x1="100" y1="40" x2="100" y2="125"/><line x1="182" y1="40" x2="182" y2="125"/><line x1="263" y1="40" x2="263" y2="125"/></g>
<rect x="60" y="70" width="244" height="14" fill="#5794f2" opacity=".08"/><rect x="60" y="84" width="244" height="14" fill="#73bf69" opacity=".08"/>
<g transform="translate(60,70) scale(1,0.7)"><polyline vector-effect="non-scaling-stroke" fill="none" stroke="#5794f2" stroke-width="1.5" points="0,-28 3,22 6,-13 9,17 12,-20 15,20 18,-16 21,16 24,-23 27,12 30,-8 33,10 36,-18 39,14 42,-13 45,10 48,-6 51,8 54,-16 57,12 60,-6 63,4 66,-10 69,10 72,-3 75,4 78,-8 81,7 84,-2 87,4 90,-6 93,6 96,-2 99,2 102,-4 105,4 108,-2 111,2 114,-5 117,5 120,-1 123,2 126,-4 129,4 132,-1 135,1 138,-3 141,4 144,-1 147,1 150,-4 153,3 156,-1 159,1 162,-3 165,3 168,-1 171,1 174,-3 177,2 180,-1 183,1 186,-3 189,3 192,-1 195,1 198,-2 201,2 204,-1 207,1 210,-3 213,2 216,-1 219,1 222,-2 225,2 228,-1 231,1 234,-2 237,2 240,-1 243,0"/></g>
<g transform="translate(60,98) scale(1,-0.7)"><polyline vector-effect="non-scaling-stroke" fill="none" stroke="#73bf69" stroke-width="1.5" points="0,-28 3,22 6,-13 9,17 12,-20 15,20 18,-16 21,16 24,-23 27,12 30,-8 33,10 36,-18 39,14 42,-13 45,10 48,-6 51,8 54,-16 57,12 60,-6 63,4 66,-10 69,10 72,-3 75,4 78,-8 81,7 84,-2 87,4 90,-6 93,6 96,-2 99,2 102,-4 105,4 108,-2 111,2 114,-5 117,5 120,-1 123,2 126,-4 129,4 132,-1 135,1 138,-3 141,4 144,-1 147,1 150,-4 153,3 156,-1 159,1 162,-3 165,3 168,-1 171,1 174,-3 177,2 180,-1 183,1 186,-3 189,3 192,-1 195,1 198,-2 201,2 204,-1 207,1 210,-3 213,2 216,-1 219,1 222,-2 225,2 228,-1 231,1 234,-2 237,2 240,-1 243,0"/></g></svg>
<div class="yl" style="left:0;width:56px;top:49px">1 rec/s</div><div class="yl" style="left:0;width:56px;top:67px">0.5 rec/s</div><div class="yl" style="left:0;width:56px;top:84px">0 rec/s</div><div class="yl" style="left:0;width:56px;top:100px">-0.5 rec/s</div><div class="yl" style="left:0;width:56px;top:117px">-1 rec/s</div>
<div class="xl" style="left:100px;top:134px">18:10</div><div class="xl" style="left:182px;top:134px">18:20</div><div class="xl" style="left:263px;top:134px">18:30</div>
<div class="lh" style="left:30px;top:147px">Name</div><div class="lh" style="right:25px;top:147px">Mean</div>
<div class="ln" style="left:6px;width:306px;top:162px"></div><div class="lr" style="left:13px;top:166px"><span class="sw" style="background:#5794f2"></span>fedora-devserver Write</div><div class="lr" style="right:13px;top:166px">0.427 rec/s</div>
<div class="ln" style="left:6px;width:306px;top:182px"></div><div class="lr" style="left:13px;top:186px"><span class="sw" style="background:#73bf69"></span>fedora-devserver Read</div><div class="lr" style="right:13px;top:186px">0.427 rec/s</div><div class="ln" style="left:6px;width:306px;top:202px"></div>
</div>

</body></html>
